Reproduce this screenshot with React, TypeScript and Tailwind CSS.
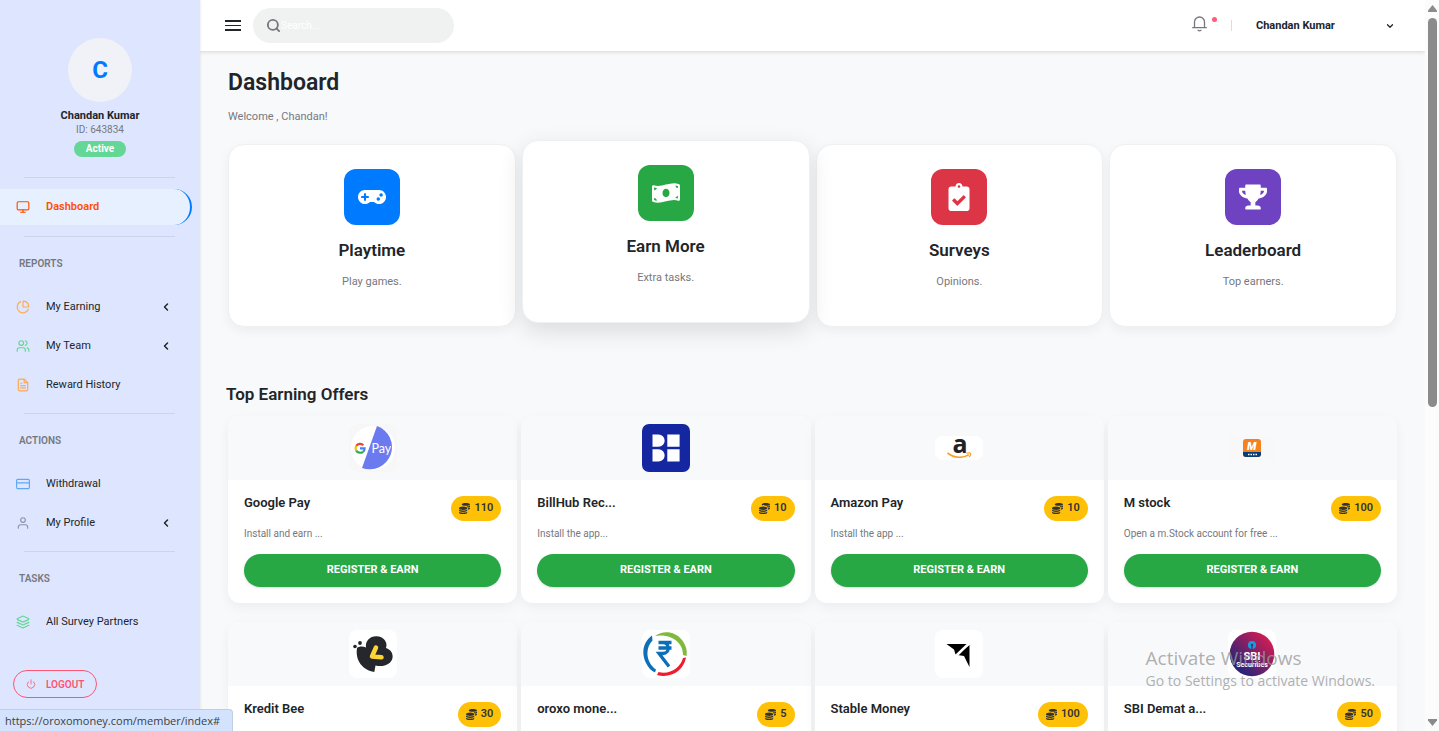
import type { ComponentType, ReactNode } from "react"
import { FiCreditCard, FiFileText, FiMonitor, FiPower, FiSearch, FiUser } from "react-icons/fi"
import { LuChartPie, LuChevronDown, LuChevronLeft, LuLayers, LuUsers } from "react-icons/lu"
import { FaClipboardCheck, FaCoins, FaGamepad, FaMoneyBillWave, FaTrophy } from "react-icons/fa"

type Icon = ComponentType<{ size?: number; className?: string }>

interface NavItem {
  label: string
  icon: Icon
  color: string
  hasChildren?: boolean
}

interface Offer {
  name: string
  description: string
  coins: number
  logo: ReactNode
}

const navSections: { title: string; items: NavItem[] }[] = [
  {
    title: "REPORTS",
    items: [
      { label: "My Earning", icon: LuChartPie, color: "text-[#fda94f]", hasChildren: true },
      { label: "My Team", icon: LuUsers, color: "text-[#64d695]", hasChildren: true },
      { label: "Reward History", icon: FiFileText, color: "text-[#fda94f]" },
    ],
  },
  {
    title: "ACTIONS",
    items: [
      { label: "Withdrawal", icon: FiCreditCard, color: "text-[#5fa8f8]" },
      { label: "My Profile", icon: FiUser, color: "text-[#8d95ab]", hasChildren: true },
    ],
  },
  {
    title: "TASKS",
    items: [{ label: "All Survey Partners", icon: LuLayers, color: "text-[#64d695]" }],
  },
]

const taskCards = [
  { title: "Playtime", text: "Play games.", icon: FaGamepad, color: "bg-[#007bff]", raised: false },
  { title: "Earn More", text: "Extra tasks.", icon: FaMoneyBillWave, color: "bg-[#28a745]", raised: true },
  { title: "Surveys", text: "Opinions.", icon: FaClipboardCheck, color: "bg-[#dc3545]", raised: false },
  { title: "Leaderboard", text: "Top earners.", icon: FaTrophy, color: "bg-[#6f42c1]", raised: false },
]

const BellIcon = () => (
  <svg width="15" height="16" viewBox="0 0 15 16" fill="none" stroke="currentColor" strokeWidth="1.300" strokeLinecap="round" aria-hidden="true">
    <path d="M2.500 11.500V6a5 5 0 0 1 10 0v5.500M.700 11.700h13.600M6 14.300q1.500 1 3 0" />
  </svg>
)

const GooglePayLogo = () => (
  <svg width="48" height="48" viewBox="0 0 48 48" aria-hidden="true">
    <rect width="48" height="48" rx="8" fill="#f7f7f7" />
    <circle cx="24" cy="24" r="22" fill="#fff" />
    <path d="M28 2a22.300 22.300 0 1 1-15 42z" fill="#6c7af0" />
    <g fill="none" strokeWidth="2.200">
      <path d="M14.300 21.200A4.700 4.700 0 0 0 7.200 21.800" stroke="#ea4335" />
      <path d="M7.200 21.800a4.700 4.700 0 0 0 0 4.800" stroke="#fbbc05" />
      <path d="M7.200 26.600a4.700 4.700 0 0 0 6.800 1.200" stroke="#34a853" />
      <path d="M14 27.800a4.500 4.500 0 0 0 1.600-3.400H11" stroke="#4285f4" />
    </g>
    <text x="22.500" y="29" fill="#fff" fontFamily="Lato, sans-serif" fontSize="12.500">Pay</text>
  </svg>
)

const BillHubLogo = () => (
  <svg width="48" height="48" viewBox="0 0 48 48" aria-hidden="true">
    <rect width="48" height="48" rx="7" fill="#1427a0" />
    <path d="M10.500 10.500h6a6 6 0 0 1 0 12.300h-6zM25.300 10.500h12.300v12.300H25.300zM10.500 25.300h6a6 6 0 0 1 0 12.300h-6zM25.300 25.300h12.300v12.300H25.300z" fill="#fff" />
  </svg>
)

const AmazonLogo = () => (
  <svg width="48" height="48" viewBox="0 0 48 48" aria-hidden="true">
    <rect y="12" width="48" height="24" rx="8" fill="#fff" />
    <text x="17.500" y="28.500" fill="#222" fontFamily="'Open Sans', sans-serif" fontWeight="700" fontSize="25">a</text>
    <path d="M12.500 29c7 5.500 15.500 5.500 21.500 1.600" fill="none" stroke="#f7a028" strokeWidth="1.600" />
    <path d="M31.500 29.400c2-.8 3.500-.8 4 0s-.2 2.300-1.300 3.600" fill="none" stroke="#f7a028" strokeWidth="1.200" />
  </svg>
)

const MStockLogo = () => (
  <svg width="48" height="26" viewBox="0 0 48 26" aria-hidden="true">
    <rect width="48" height="26" rx="6" fill="#f8f8f9" />
    <rect x="15" y="4" width="18" height="18" rx="3" fill="#f58220" />
    <path d="M15 17h18v2a3 3 0 0 1-3 3H18a3 3 0 0 1-3-3z" fill="#0c3c78" />
    <text x="19" y="15" fill="#fff" fontFamily="Roboto, sans-serif" fontWeight="900" fontStyle="italic" fontSize="11">M</text>
    <path d="M20 19.500h1.500M22.500 19.500H24M25 19.500h1.500M27.500 19.500H29" stroke="#fff" strokeWidth="1.500" />
  </svg>
)

const KreditBeeLogo = () => (
  <svg width="48" height="48" viewBox="0 0 48 48" aria-hidden="true">
    <rect width="48" height="48" rx="8" fill="#fff" />
    <circle cx="6" cy="16.500" r="1.800" fill="#26272d" />
    <circle cx="11" cy="13" r="1.900" fill="#26272d" />
    <path d="M8 18c2-2 6-2 9-.500C16 11 21 6 27.500 6.200c7 .3 11.500 5.500 9.500 11.800 5 1.500 7.300 6 6.500 10-1.200 6-8.500 9.500-17 7.500l-1.200 6.500C14 40 6 31 8 18z" fill="#26272d" />
    <path d="M27 17.500 23 26.500l9.500.8" fill="none" stroke="#fdd433" strokeWidth="4.500" strokeLinecap="round" strokeLinejoin="round" />
  </svg>
)

const OroxoLogo = () => (
  <svg width="48" height="48" viewBox="0 0 48 48" aria-hidden="true">
    <rect width="48" height="48" rx="8" fill="#fff" />
    <path d="M13 6C21 0 33 1 40 10c4 5 5.500 11 4.500 16l-3.500-1C41.500 12 28 3 13 6z" fill="#7fba3c" />
    <path d="M44 27.500C42 40 29 49 15 45l1.500-3c11 3 22-4 24.500-14z" fill="#ee1c2e" />
    <path d="M10 5.500C1 12-1 23 4 33c2.200 4.500 5.500 8 9 9.500l1-3C3.500 32 3 18 10.500 10.500z" fill="#0d6fb8" />
    <path d="M16.500 12.500h13M16.500 18h13M17 12.500h4c7 0 7 11 0 11h-4l10 13" fill="none" stroke="#0d6fb8" strokeWidth="3.300" />
  </svg>
)

const StableMoneyLogo = () => (
  <svg width="48" height="48" viewBox="0 0 48 48" aria-hidden="true">
    <rect width="48" height="48" rx="8" fill="#fff" />
    <path d="M11.500 14h20l-11 10.500-1.500-5zM34.500 15v22l-5.500-11-6.500-1z" fill="#000" />
    <path d="M20 28 34 14" stroke="#fff" strokeWidth="1.200" />
  </svg>
)

const SbiLogo = () => (
  <svg width="48" height="48" viewBox="0 0 48 48" aria-hidden="true">
    <defs>
      <linearGradient id="sbi" x1="0" y1="1" x2="1" y2="0">
        <stop offset="0.200" stopColor="#2b2477" />
        <stop offset="0.850" stopColor="#cf1d55" />
      </linearGradient>
    </defs>
    <rect width="48" height="48" rx="8" fill="#fff" />
    <circle cx="24" cy="24" r="22.300" fill="url(#sbi)" />
    <circle cx="24" cy="15" r="4" fill="#12a0dc" />
    <path d="M24 15v4" stroke="#5b2272" strokeWidth="1.300" />
    <circle cx="24" cy="15" r="1.200" fill="#5b2272" />
    <text x="24" y="30" textAnchor="middle" fill="#fff" fontFamily="Roboto, sans-serif" fontWeight="700" fontSize="11">SBI</text>
    <text x="24" y="37" textAnchor="middle" fill="#fff" fontFamily="Roboto, sans-serif" fontWeight="700" fontSize="7">Securities</text>
  </svg>
)

const offers: Offer[] = [
  { name: "Google Pay", description: "Install and earn ...", coins: 110, logo: <GooglePayLogo /> },
  { name: "BillHub Rec...", description: "Install the app...", coins: 10, logo: <BillHubLogo /> },
  { name: "Amazon Pay", description: "Install the app ...", coins: 10, logo: <AmazonLogo /> },
  { name: "M stock", description: "Open a m.Stock account for free ...", coins: 100, logo: <MStockLogo /> },
  { name: "Kredit Bee", description: "Install and earn ...", coins: 30, logo: <KreditBeeLogo /> },
  { name: "oroxo mone...", description: "Install the app...", coins: 5, logo: <OroxoLogo /> },
  { name: "Stable Money", description: "Install the app ...", coins: 100, logo: <StableMoneyLogo /> },
  { name: "SBI Demat a...", description: "Open a demat account ...", coins: 50, logo: <SbiLogo /> },
]

const Divider = () => <hr className="ml-6 mr-[25px] border-[#cdd3ec]" />

const Sidebar = () => (
  <aside className="w-[200px] shrink-0 bg-[#dee6ff] shadow-[0_0_3px_rgba(0,0,0,0.12)] z-10">
    <div className="flex flex-col items-center pt-[38px] pb-5">
      <div className="size-16 rounded-full bg-[#f0f2f7] flex items-center justify-center text-2xl font-bold text-[#007bff]">C</div>
      <p className="mt-1.5 text-[11px] leading-4 font-bold text-[#212529]">Chandan Kumar</p>
      <p className="text-[10px] leading-3 text-[#76787e]">ID: 643834</p>
      <span className="mt-[5px] h-4 px-3 rounded-full bg-[#64d695] text-[10px] leading-4 font-bold text-white">Active</span>
    </div>

    <nav>
      <Divider />
      <a href="#" className="my-[11px] mr-2 h-9 pl-4 flex items-center gap-4 rounded-r-full border-r-2 border-[#007bff] bg-[#e7f0ff] text-[11px] font-semibold text-[#ff4f00]">
        <FiMonitor size={14} />
        Dashboard
      </a>
      {navSections.map((section) => (
        <div key={section.title}>
          <Divider />
          <h2 className="h-[52px] pl-[19px] flex items-center text-[10px] font-semibold text-[#76787e]">{section.title}</h2>
          <ul className="flex flex-col gap-[3px] pb-2.5">
            {section.items.map((item) => (
              <li key={item.label}>
                <a href="#" className="h-9 pl-4 pr-7 flex items-center gap-4 text-[11px] text-[#212529]">
                  <item.icon size={14} className={item.color} />
                  <span className="flex-1">{item.label}</span>
                  {item.hasChildren && <LuChevronLeft size={12} strokeWidth={3} />}
                </a>
              </li>
            ))}
          </ul>
        </div>
      ))}
    </nav>

    <button className="mt-5 ml-[13px] h-7 px-3 flex items-center gap-2.5 rounded-full border border-[#ff5470] text-[10px] font-semibold text-[#ff5470]">
      <FiPower size={10} />
      LOGOUT
    </button>
  </aside>
)

const Header = () => (
  <header className="h-[51px] pl-[25px] pr-[30px] flex items-center bg-white shadow-[0_1px_4px_rgba(0,0,0,0.15)]">
    <button aria-label="Toggle menu" className="flex flex-col gap-[3px]">
      <span className="block w-4 h-0.5 bg-[#212529]" />
      <span className="block w-4 h-px bg-[#212529]" />
      <span className="block w-4 h-0.5 bg-[#212529]" />
    </button>
    <label className="ml-3 h-[35px] w-[201px] pl-[13px] flex items-center rounded-full bg-[#f0f2f2]">
      <FiSearch size={15} strokeWidth={3} className="text-[#76787e]" />
      <input type="text" aria-label="Search" placeholder="Search..." className="min-w-0 flex-1 bg-transparent text-[10px] outline-none placeholder:text-white" />
    </label>
    <div className="ml-auto flex items-center">
      <button aria-label="Notifications" className="relative mb-1 text-[#76787e]">
        <BellIcon />
        <span className="absolute -right-2.5 top-px size-[5px] rounded-full bg-[#ff5c75]" />
      </button>
      <span className="ml-6 h-[11px] w-px bg-[#dcdcdc]" />
      <button className="ml-6 pt-px w-[139px] flex items-center justify-between text-[11px] font-bold text-[#212529]">
        Chandan Kumar
        <LuChevronDown size={10} strokeWidth={3} />
      </button>
    </div>
  </header>
)

const OfferCard = ({ offer }: { offer: Offer }) => (
  <article className="rounded-xl bg-white overflow-hidden shadow-[0_4px_12px_rgba(0,0,0,0.05)]">
    <div className="h-16 flex items-center justify-center bg-[#f8f9fb]">{offer.logo}</div>
    <div className="p-4">
      <div className="flex items-start justify-between">
        <h3 className="text-[13px] leading-[14px] font-semibold text-[#212529]">{offer.name}</h3>
        <span className="h-[25px] px-2 flex items-center gap-1 rounded-full bg-[#ffc107] text-[11px] font-semibold text-[#333]">
          <FaCoins size={11} />
          {offer.coins}
        </span>
      </div>
      <p className="mt-1.5 text-[10px] leading-[14px] text-[#76787e]">{offer.description}</p>
      <button className="mt-[13px] h-[33px] w-full rounded-full bg-[#28a745] text-[11px] font-bold text-white shadow-sm">REGISTER &amp; EARN</button>
    </div>
  </article>
)

const Scrollbar = () => (
  <div className="w-3.5 shrink-0 flex flex-col items-center justify-between bg-[#fcfcfc] py-[5px]" aria-hidden="true">
    <svg width="9" height="7" viewBox="0 0 9 7"><path d="M4.500 0 9 5.500V7H0V5.500z" fill="#8b8b8b" /></svg>
    <div className="mt-1.5 mb-auto w-[9px] h-[54%] rounded-full bg-[#8b8b8b]" />
    <svg width="9" height="7" viewBox="0 0 9 7"><path d="M0 0h9v1.500L4.500 7 0 1.500z" fill="#8b8b8b" /></svg>
  </div>
)

const App = () => {
  return (
    <div className="relative flex h-screen overflow-hidden bg-[#f8f9fb] font-[Roboto,sans-serif]">
      <Sidebar />
      <div className="flex-1 min-w-0">
        <Header />
        <main className="px-7 pt-4">
          <h1 className="text-[23px] leading-8 font-semibold text-[#212529]">Dashboard</h1>
          <p className="mt-2.5 text-[11px] leading-4 text-[#76787e]">Welcome , Chandan!</p>

          <section className="mt-[19px] grid grid-cols-4 gap-1.5">
            {taskCards.map((card) => (
              <a
                key={card.title}
                href="#"
                className={`h-[183px] pt-6 flex flex-col items-center rounded-[16px] border border-[#eff0f1] bg-white ${
                  card.raised ? "-translate-y-1 shadow-[0_8px_24px_rgba(0,0,0,0.12)]" : "shadow-[0_4px_12px_rgba(0,0,0,0.05)]"
                }`}
              >
                <span className={`size-14 flex items-center justify-center rounded-xl text-white ${card.color}`}>
                  <card.icon size={28} />
                </span>
                <h2 className="mt-[15px] text-[17px] leading-5 font-semibold text-[#212529]">{card.title}</h2>
                <p className="mt-3.5 text-[11px] leading-4 text-[#76787e]">{card.text}</p>
              </a>
            ))}
          </section>

          <section className="mt-[55px]">
            <h2 className="-ml-0.5 text-[17px] leading-6 font-semibold text-[#212529]">Top Earning Offers</h2>
            <div className="mt-2.5 grid grid-cols-4 gap-x-1 gap-y-[19px]">
              {offers.map((offer) => (
                <OfferCard key={offer.name} offer={offer} />
              ))}
            </div>
          </section>
        </main>
      </div>
      <Scrollbar />

      <div className="absolute right-16 bottom-[39px] font-['Open_Sans',sans-serif] text-[#9b9b9b]/80 pointer-events-none">
        <p className="text-[19px] leading-6">Activate Windows</p>
        <p className="text-[14px] leading-[22px]">Go to Settings to activate Windows.</p>
      </div>
      <div className="absolute left-0 bottom-0 z-20 h-[22px] pl-[5px] pr-3 rounded-tr border-t border-r border-[#c3cde0] bg-[#d3e3fd] font-['Open_Sans',sans-serif] text-[11px] leading-[21px] text-[#3c4043]">
        https://oroxomoney.com/member/index#
      </div>
    </div>
  )
}

export default App
